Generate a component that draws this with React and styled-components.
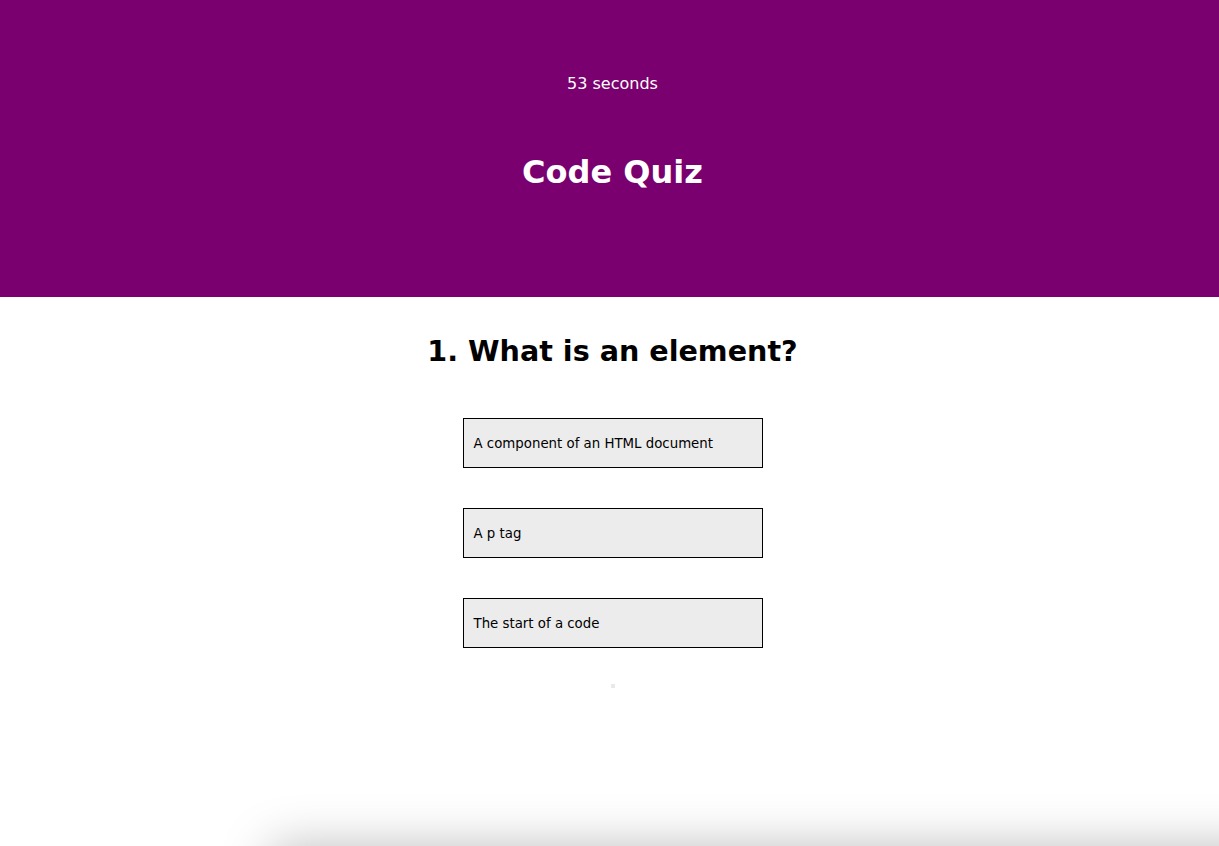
import React from "react";
import styled, { createGlobalStyle } from "styled-components";

const Global = createGlobalStyle`
  html, body { margin: 0; padding: 0; background: #fff; }
  body { font-family: "DejaVu Sans", Verdana, sans-serif; overflow: hidden; }
`;

const Page = styled.div`
  width: 1225px;
`;

const Header = styled.header`
  height: 297px;
  box-sizing: border-box;
  background: #7a006f;
  color: #fff;
  display: flex;
  flex-direction: column;
  align-items: center;
  padding-top: 74px;
`;

const Timer = styled.p`
  margin: 0;
  font-size: 16px;
  line-height: 19px;
`;

const Title = styled.h1`
  margin: 60px 0 0;
  font-size: 32px;
  line-height: 38px;
  font-weight: bold;
`;

const Main = styled.main`
  display: flex;
  flex-direction: column;
  align-items: center;
`;

const Question = styled.h2`
  margin: 38px 0 50px;
  font-size: 28.6px;
  line-height: 33px;
  font-weight: bold;
  color: #000;
`;

const Choices = styled.div`
  display: flex;
  flex-direction: column;
  gap: 40px;
`;

const Choice = styled.button`
  width: 300px;
  height: 50px;
  box-sizing: border-box;
  background: #ececec;
  border: 1px solid #000;
  padding: 0 10px;
  text-align: left;
  font-family: "DejaVu Sans", Verdana, sans-serif;
  font-size: 13.333px;
  color: #000;
  cursor: pointer;
`;

const Feedback = styled.div`
  width: 4px;
  height: 4px;
  margin-top: 36px;
  background: #e9e9e9;
`;

const Footer = styled.footer`
  margin: 158px -200px 0 270px;
  height: 120px;
  background: #fff;
  border-radius: 12px;
  box-shadow: 0 0 50px rgba(0, 0, 0, 0.26);
`;

const choices = [
  "A component of an HTML document",
  "A p tag",
  "The start of a code",
];

export default function App() {
  return (
    <Page>
      <Global />
      <Header>
        <Timer>53 seconds</Timer>
        <Title>Code Quiz</Title>
      </Header>
      <Main>
        <Question>1. What is an element?</Question>
        <Choices>
          {choices.map((c) => (
            <Choice key={c}>{c}</Choice>
          ))}
        </Choices>
        <Feedback />
      </Main>
      <Footer />
    </Page>
  );
}
